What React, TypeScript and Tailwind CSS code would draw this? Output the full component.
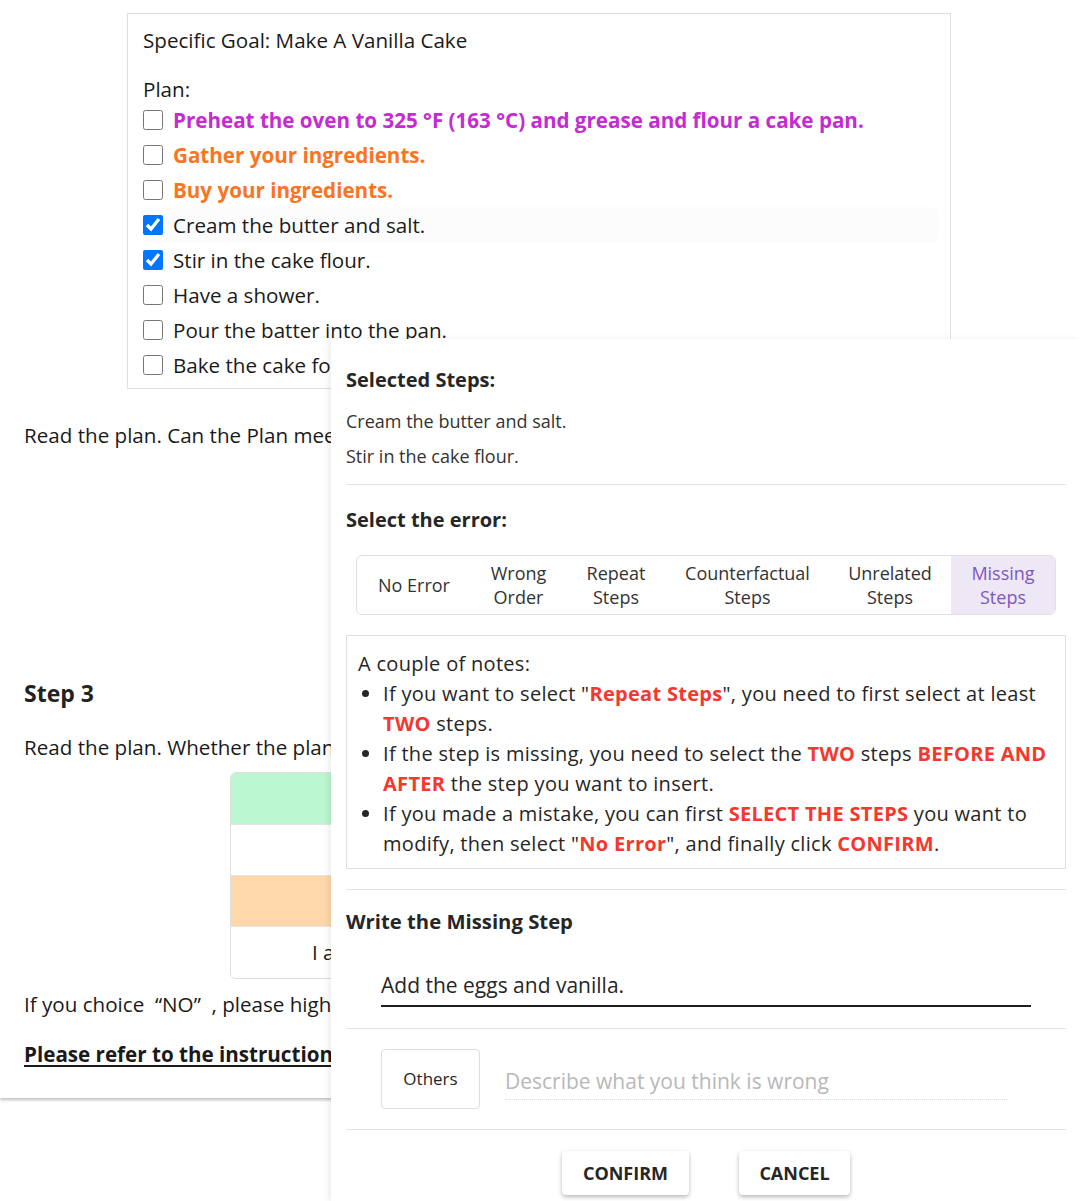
import React from "react";

const FONT = { fontFamily: "'Open Sans', 'Noto Sans', sans-serif" };

const PLAN = [
  { text: "Preheat the oven to 325 °F (163 °C) and grease and flour a cake pan.", tone: "magenta", checked: false },
  { text: "Gather your ingredients.", tone: "orange", checked: false },
  { text: "Buy your ingredients.", tone: "orange", checked: false },
  { text: "Cream the butter and salt.", tone: "plain", checked: true, hover: true },
  { text: "Stir in the cake flour.", tone: "plain", checked: true },
  { text: "Have a shower.", tone: "plain", checked: false },
  { text: "Pour the batter into the pan.", tone: "plain", checked: false },
  { text: "Bake the cake for 1 hour 15 minutes.", tone: "plain", checked: false },
];

const TABS = [
  { label: ["No Error"], w: "w-[114px]" },
  { label: ["Wrong", "Order"], w: "w-[95px]" },
  { label: ["Repeat", "Steps"], w: "w-[100px]" },
  { label: ["Counterfactual", "Steps"], w: "w-[163px]" },
  { label: ["Unrelated", "Steps"], w: "w-[122px]" },
  { label: ["Missing", "Steps"], w: "flex-1", active: true },
];

function Red({ children }: { children: React.ReactNode }) {
  return <span className="font-bold text-[#f4382f]">{children}</span>;
}

function PlanBox() {
  return (
    <div className="ml-[127px] mt-[13px] w-[824px] border border-[#dedede] px-[15px] pt-[13px] pb-[6px]">
      <p className="text-[20.6px] leading-[26px] text-[#1a1a1a]">Specific Goal: Make A Vanilla Cake</p>
      <p className="mt-[23px] text-[20.6px] leading-[26px] text-[#1a1a1a]">Plan:</p>
      <div className="flex flex-col">
        {PLAN.map((p) => (
          <label
            key={p.text}
            className={`flex h-[35px] items-center gap-[10px] rounded-lg -ml-[3px] pl-[3px] mr-[-4px] ${p.hover ? "bg-[#fcfcfc]" : ""}`}
          >
            <input
              type="checkbox"
              defaultChecked={p.checked}
              className="m-0 h-[20px] w-[20px] shrink-0 accent-[#0075ff]"
            />
            <span
              className={`text-[20.6px] leading-[26px] whitespace-nowrap ${
                p.tone === "magenta"
                  ? "font-bold text-[#c42bd1]"
                  : p.tone === "orange"
                  ? "font-bold text-[#fa7423]"
                  : "text-[#1a1a1a]"
              }`}
            >
              {p.text}
            </span>
          </label>
        ))}
      </div>
    </div>
  );
}

function BackgroundPage() {
  return (
    <div className="relative h-[1098px] w-[1080px] overflow-hidden bg-white shadow-[0_2px_3px_rgba(0,0,0,0.25)]">
      <PlanBox />
      <div className="px-[24px]">
        <p className="mt-[33px] whitespace-nowrap text-[20.6px] leading-[26px] text-[#1a1a1a]">
          Read the plan. Can the Plan meet the specific goal?
        </p>
        <h2 className="mt-[230px] text-[23px] font-bold leading-[30px] text-[#222]">Step 3</h2>
        <p className="mt-[26px] whitespace-nowrap text-[20.6px] leading-[26px] text-[#1a1a1a]">
          Read the plan. Whether the plan is detailed enough?
        </p>
        <div className="ml-[206px] mt-[12px] w-[600px] overflow-hidden rounded-md border border-[#dedede]">
          <div className="h-[51px] bg-[#bbf7d0]" />
          <div className="h-[51px] border-t border-[#e5e5e5] bg-white" />
          <div className="h-[51px] border-t border-[#e5e5e5] bg-[#fed7aa]" />
          <div className="flex h-[52px] items-center border-t border-[#e5e5e5] bg-white pl-[81px] text-[20.6px] text-[#1a1a1a]">
            I am not sure
          </div>
        </div>
        <p className="mt-[12px] whitespace-nowrap text-[20.6px] leading-[26px] text-[#1a1a1a]">
          If you choice &nbsp;“NO” &nbsp;, please highlight the steps that need to be improved.
        </p>
        <p className="mt-[24px] whitespace-nowrap text-[20.6px] font-bold leading-[26px] text-[#1a1a1a] underline underline-offset-[3px]">
          Please refer to the instruction to select the error types.
        </p>
      </div>
    </div>
  );
}

function Divider() {
  return <div className="h-px bg-[#e4e4e4]" />;
}

function ErrorDialog() {
  return (
    <div className="absolute left-[331px] right-0 top-[339px] bottom-0 bg-white pl-[15px] pr-[14px] shadow-[-3px_0_6px_rgba(0,0,0,0.07)]">
      <h3 className="mt-[28px] text-[20px] font-bold leading-[26px] text-[#262626]">Selected Steps:</h3>
      <p className="mt-[16px] text-[18px] leading-[24px] text-[#333]">Cream the butter and salt.</p>
      <p className="mt-[11px] text-[18px] leading-[24px] text-[#333]">Stir in the cake flour.</p>
      <div className="mt-[16px]">
        <Divider />
      </div>
      <h3 className="mt-[22px] text-[20px] font-bold leading-[26px] text-[#262626]">Select the error:</h3>

      <div className="ml-[10px] mr-[10px] mt-[22px] flex h-[60px] overflow-hidden rounded-md border border-[#e0e0e0]">
        {TABS.map((t) => (
          <div
            key={t.label.join(" ")}
            className={`${t.w} flex flex-col items-center justify-center text-center text-[18px] leading-[24px] ${
              t.active ? "bg-[#ede7f6] text-[#7e57c2]" : "text-[#333]"
            }`}
          >
            {t.label.map((l) => (
              <span key={l}>{l}</span>
            ))}
          </div>
        ))}
      </div>

      <div className="mt-[20px] border border-[#e0e0e0] px-[11px] pt-[13px] pb-[9px] text-[20px] leading-[30px] tracking-[0.3px] text-[#262626]">
        <p>A couple of notes:</p>
        <ul className="list-disc pl-[25px]">
          <li className="whitespace-nowrap">
            If you want to select "<Red>Repeat Steps</Red>", you need to first select at least
            <br />
            <Red>TWO</Red> steps.
          </li>
          <li className="whitespace-nowrap">
            If the step is missing, you need to select the <Red>TWO</Red> steps <Red>BEFORE AND</Red>
            <br />
            <Red>AFTER</Red> the step you want to insert.
          </li>
          <li className="whitespace-nowrap">
            If you made a mistake, you can first <Red>SELECT THE STEPS</Red> you want to
            <br />
            modify, then select "<Red>No Error</Red>", and finally click <Red>CONFIRM</Red>.
          </li>
        </ul>
      </div>

      <div className="mt-[20px]">
        <Divider />
      </div>
      <h3 className="mt-[18px] text-[20.3px] font-bold leading-[26px] text-[#262626]">Write the Missing Step</h3>
      <div className="ml-[35px] mr-[35px] mt-[38px] border-b-2 border-[#1f1f1f] pb-[6px]">
        <input
          defaultValue="Add the eggs and vanilla."
          className="w-full bg-transparent text-[21px] leading-[26px] text-[#262626] outline-none"
        />
      </div>
      <div className="mt-[21px]">
        <Divider />
      </div>
      <div className="ml-[35px] mt-[20px] flex items-center gap-[25px]">
        <div className="flex h-[60px] w-[99px] items-center justify-center rounded border border-[#dedede] text-[17px] text-[#262626]">
          Others
        </div>
        <div className="mt-[10px] w-[502px] border-b border-dotted border-[#e0e0e0] pb-[4px]">
          <input
            placeholder="Describe what you think is wrong"
            className="w-full bg-transparent text-[21px] leading-[26px] text-[#262626] outline-none placeholder:text-[#b8b8b8]"
          />
        </div>
      </div>
      <div className="mt-[20px]">
        <Divider />
      </div>
      <div className="mt-[21px] flex justify-center gap-[50px]">
        <button className="h-[44px] w-[127px] rounded bg-white text-[18px] font-bold text-[#262626] shadow-[0_2px_4px_rgba(0,0,0,0.28)]">
          CONFIRM
        </button>
        <button className="h-[44px] w-[111px] rounded bg-white text-[18px] font-bold text-[#262626] shadow-[0_2px_4px_rgba(0,0,0,0.28)]">
          CANCEL
        </button>
      </div>
    </div>
  );
}

export default function App() {
  return (
    <div className="relative h-[1201px] w-[1080px] overflow-hidden bg-white" style={FONT}>
      <BackgroundPage />
      <ErrorDialog />
    </div>
  );
}
